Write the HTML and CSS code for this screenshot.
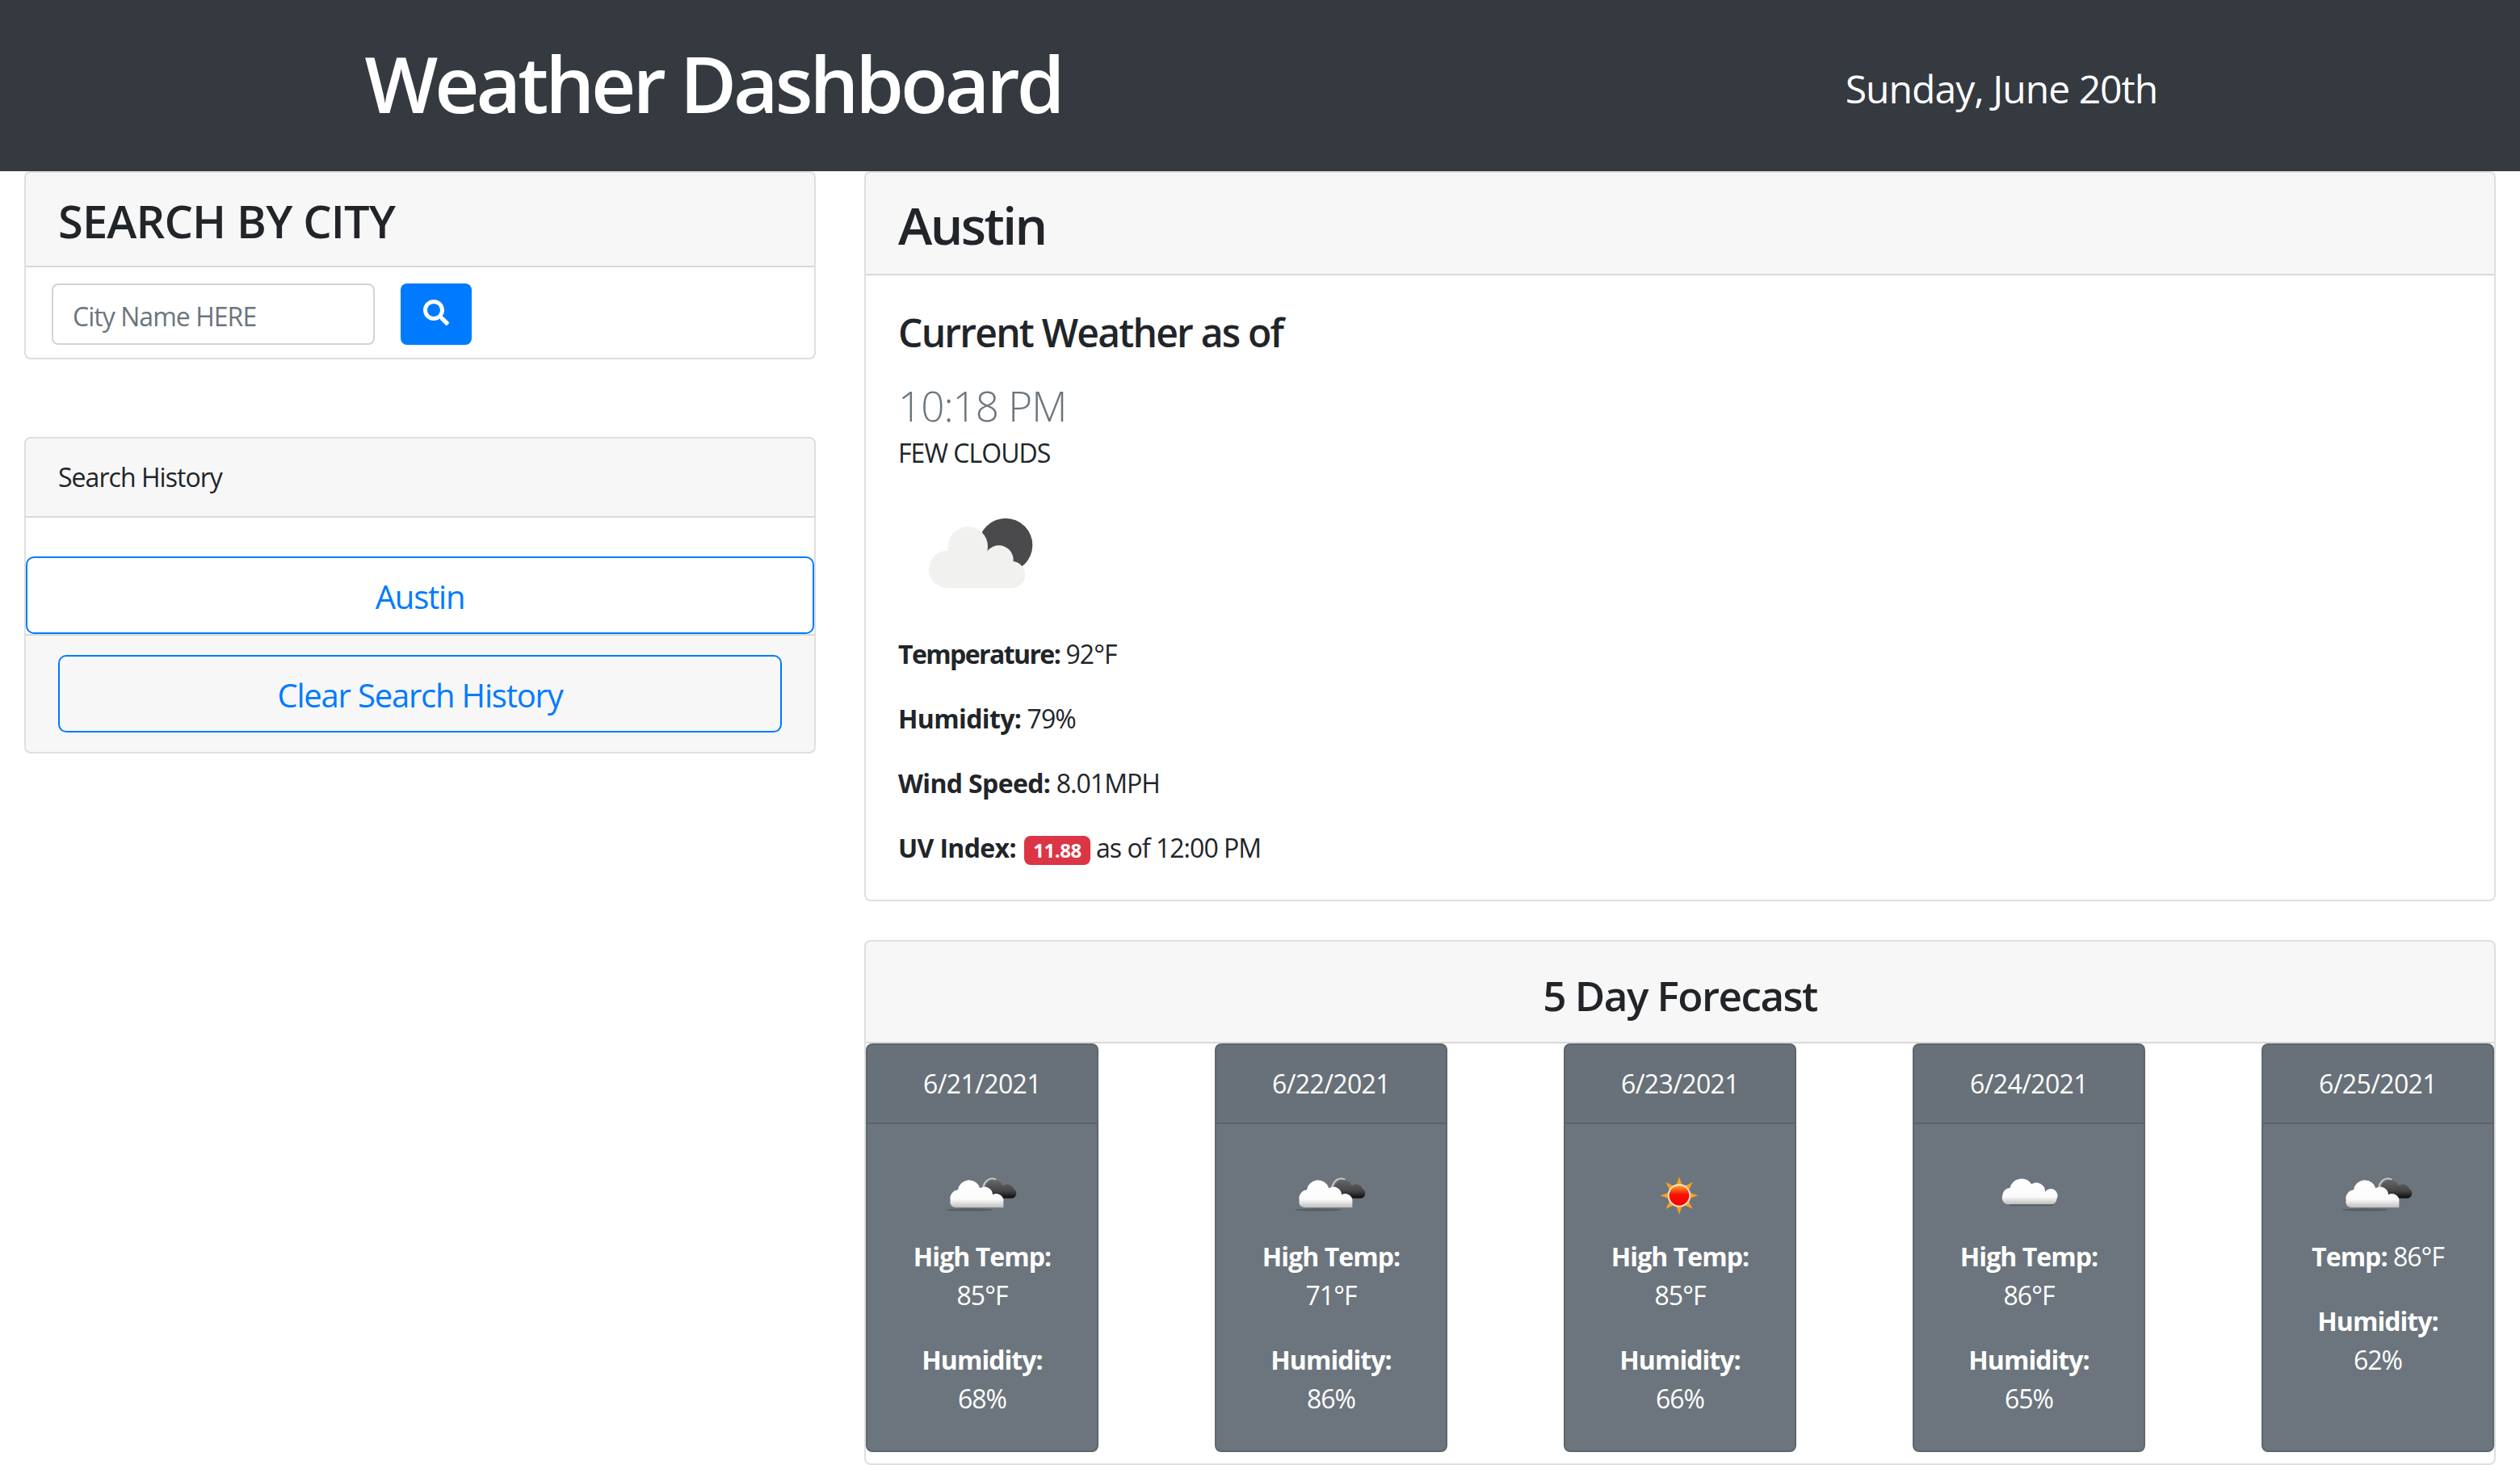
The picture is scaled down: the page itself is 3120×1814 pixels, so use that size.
FILE: index.html
```html
<!DOCTYPE html>
<html lang="en">
<head>
<meta charset="utf-8">
<title>Weather Dashboard</title>
<link rel="stylesheet" href="styles.css">
</head>
<body>
<svg class="sprite" aria-hidden="true">
  <defs>
    <linearGradient id="white-cloud" x1="0" y1="0" x2="0" y2="1">
      <stop offset="0" stop-color="#ffffff"/>
      <stop offset="0.7" stop-color="#fbfbfb"/>
      <stop offset="1" stop-color="#bdbdbd"/>
    </linearGradient>
    <linearGradient id="dark-cloud" x1="0" y1="0" x2="0" y2="1">
      <stop offset="0" stop-color="#666668"/>
      <stop offset="0.6" stop-color="#454547"/>
      <stop offset="1" stop-color="#0c0c0c"/>
    </linearGradient>
    <linearGradient id="sun-core" x1="0" y1="0" x2="0" y2="1">
      <stop offset="0" stop-color="#fba52a"/>
      <stop offset="0.45" stop-color="#fb0f04"/>
      <stop offset="1" stop-color="#ff0000"/>
    </linearGradient>
    <symbol id="i-partly" viewBox="18 -36 300 300">
      <ellipse cx="120" cy="168" rx="85" ry="5" fill="#3f454b" opacity=".45"/>
      <path d="M172 84C178 58 200 44 220 56" fill="none" stroke="#c9c9c9" stroke-width="6"/>
      <g fill="url(#dark-cloud)">
        <path d="M180 125V85A34 34 0 0 1 245 78A26 26 0 0 1 285 90A19 19 0 0 1 280 125Z"/>
      </g>
      <path d="M50 133A32 32 0 0 1 78 94A42 42 0 0 1 160 88A30 30 0 0 1 207 112A27 27 0 0 1 247 140V160H68A20 20 0 0 1 50 133Z" fill="url(#white-cloud)"/>
    </symbol>
    <symbol id="i-cloud" viewBox="-24 -36 300 300">
      <rect x="55" y="146" width="160" height="7" fill="#3f454b" opacity=".6"/>
      <path d="M27 118A32 32 0 0 1 56 86A44 44 0 0 1 136 73A32 32 0 0 1 186 102A24 24 0 0 1 229 128A20 20 0 0 1 210 148H50A24 24 0 0 1 27 118Z" fill="url(#white-cloud)"/>
    </symbol>
    <symbol id="i-sun" viewBox="-27 -36 300 300">
      <polygon points="120,45 133,83 170,65 152,102 190,115 152,128 170,165 133,147 120,185 107,147 70,165 88,128 50,115 88,102 70,65 107,83" fill="#f7a11d"/>
      <circle cx="120" cy="115" r="43" fill="#fbe3c4"/>
      <circle cx="120" cy="115" r="37" fill="url(#sun-core)"/>
    </symbol>
  </defs>
</svg>

<header class="topbar">
  <h1 class="topbar-title">Weather Dashboard</h1>
  <p class="topbar-date">Sunday, June 20th</p>
</header>

<main class="layout">
  <aside class="sidebar">
    <section class="card search-card">
      <div class="card-header"><h3 class="search-title">SEARCH BY CITY</h3></div>
      <form class="search-form">
        <input class="city-input" type="text" placeholder="City Name HERE">
        <button class="search-btn" type="button" aria-label="Search">
          <svg class="search-icon" viewBox="0 0 512 512"><path fill="currentColor" d="M505 442.7L405.3 343c-4.5-4.5-10.6-7-17-7H372c27.6-35.3 44-79.7 44-128C416 93.1 322.9 0 208 0S0 93.1 0 208s93.1 208 208 208c48.3 0 92.7-16.4 128-44v16.3c0 6.4 2.5 12.5 7 17l99.7 99.7c9.4 9.4 24.6 9.4 33.9 0l28.3-28.3c9.4-9.4 9.4-24.6.1-34zM208 336c-70.7 0-128-57.2-128-128 0-70.7 57.2-128 128-128 70.7 0 128 57.2 128 128 0 70.7-57.2 128-128 128z"/></svg>
        </button>
      </form>
    </section>

    <section class="card history-card">
      <div class="card-header history-header">Search History</div>
      <div class="history-list">
        <button class="btn-outline btn-block" type="button">Austin</button>
      </div>
      <div class="history-footer">
        <button class="btn-outline btn-block" type="button">Clear Search History</button>
      </div>
    </section>
  </aside>

  <div class="content">
    <section class="card">
      <div class="card-header city-header"><h2 class="city-name">Austin</h2></div>
      <div class="current-body">
        <h4 class="current-title">Current Weather as of</h4>
        <div class="current-time">10:18 PM</div>
        <div class="current-desc">FEW CLOUDS</div>
        <svg class="current-icon" viewBox="-54 -135 600 600">
          <circle cx="345" cy="135" r="100" fill="#4a4a4c"/>
          <g fill="#f1f1f0">
            <circle cx="130" cy="225" r="70"/>
            <circle cx="205" cy="140" r="74"/>
            <circle cx="320" cy="190" r="54"/>
            <circle cx="368" cy="245" r="50"/>
            <rect x="130" y="170" width="238" height="125"/>
          </g>
        </svg>
        <p class="stat stat-temp"><strong>Temperature:</strong> 92°F</p>
        <p class="stat"><strong>Humidity:</strong> 79%</p>
        <p class="stat"><strong>Wind Speed:</strong> 8.01MPH</p>
        <p class="stat stat-last"><strong>UV Index:</strong> <span class="badge">11.88</span> as of 12:00 PM</p>
      </div>
    </section>

    <section class="card forecast-card">
      <div class="card-header forecast-header"><h2 class="forecast-title">5 Day Forecast</h2></div>
      <div class="forecast-row">
        <article class="day">
          <div class="day-date">6/21/2021</div>
          <div class="day-body">
            <svg class="day-icon"><use href="#i-partly"/></svg>
            <p class="day-line"><strong>High Temp:</strong><br>85°F</p>
            <p class="day-line day-last"><strong>Humidity:</strong><br>68%</p>
          </div>
        </article>
        <article class="day">
          <div class="day-date">6/22/2021</div>
          <div class="day-body">
            <svg class="day-icon"><use href="#i-partly"/></svg>
            <p class="day-line"><strong>High Temp:</strong><br>71°F</p>
            <p class="day-line day-last"><strong>Humidity:</strong><br>86%</p>
          </div>
        </article>
        <article class="day">
          <div class="day-date">6/23/2021</div>
          <div class="day-body">
            <svg class="day-icon"><use href="#i-sun"/></svg>
            <p class="day-line"><strong>High Temp:</strong><br>85°F</p>
            <p class="day-line day-last"><strong>Humidity:</strong><br>66%</p>
          </div>
        </article>
        <article class="day">
          <div class="day-date">6/24/2021</div>
          <div class="day-body">
            <svg class="day-icon"><use href="#i-cloud"/></svg>
            <p class="day-line"><strong>High Temp:</strong><br>86°F</p>
            <p class="day-line day-last"><strong>Humidity:</strong><br>65%</p>
          </div>
        </article>
        <article class="day">
          <div class="day-date">6/25/2021</div>
          <div class="day-body">
            <svg class="day-icon"><use href="#i-partly"/></svg>
            <p class="day-line"><strong>Temp:</strong> 86°F</p>
            <p class="day-line day-last"><strong>Humidity:</strong><br>62%</p>
          </div>
        </article>
      </div>
    </section>
  </div>
</main>
</body>
</html>
```

FILE: styles.css
```css
* { box-sizing: border-box; }

html, body { margin: 0; padding: 0; }

body {
  background: #fff;
  color: #212529;
  font-family: "Open Sans", "Noto Sans", sans-serif;
  font-size: 32px;
  line-height: 48px;
  letter-spacing: -0.03em;
  overflow: hidden;
}

.sprite { display: block; width: 0; height: 0; }

h1, h2, h3, h4, p { margin: 0; }

.topbar {
  display: grid;
  grid-template-columns: 7fr 5fr;
  align-items: center;
  height: 212px;
  background: #343a40;
  color: #fff;
}

.topbar-title {
  padding: 0 54px 8px 0;
  font-size: 96px;
  font-weight: 600;
  line-height: 115px;
  letter-spacing: -0.042em;
  text-align: center;
}

.topbar-date {
  padding: 8px 0 0 16px;
  font-size: 48px;
  font-weight: 400;
  line-height: 72px;
  text-align: center;
}

.layout {
  display: grid;
  grid-template-columns: 1040px 2080px;
}

.sidebar { padding: 0 30px; }
.content { padding: 0 30px; }

.card {
  background: #fff;
  border: 2px solid rgba(0, 0, 0, 0.125);
  border-radius: 8px;
  overflow: hidden;
}

.card-header {
  padding: 26px 40px 22px;
  background: rgba(0, 0, 0, 0.03);
  border-bottom: 2px solid rgba(0, 0, 0, 0.125);
}

.search-title {
  font-size: 56px;
  font-weight: 600;
  line-height: 67px;
  letter-spacing: -0.015em;
}

.search-form {
  display: flex;
  gap: 32px;
  padding: 20px 32px 16px;
}

.city-input {
  width: 400px;
  height: 76px;
  padding: 14px 24px 10px;
  border: 2px solid #ced4da;
  border-radius: 8px;
  color: #495057;
  font: inherit;
  letter-spacing: inherit;
}

.city-input::placeholder { color: #6c757d; opacity: 1; }

.search-btn {
  display: flex;
  align-items: center;
  justify-content: center;
  width: 88px;
  height: 76px;
  padding: 0 0 4px;
  background: #007bff;
  border: 0;
  border-radius: 8px;
  color: #fff;
}

.search-icon { width: 32px; height: 32px; }

.history-card { margin-top: 96px; }

.history-header { padding: 24px 40px; }

.history-list { padding: 48px 0 0; }

.btn-outline {
  display: block;
  height: 96px;
  padding: 18px 16px 14px;
  background: transparent;
  border: 2px solid #007bff;
  border-radius: 10px;
  color: #007bff;
  font: inherit;
  font-size: 40px;
  line-height: 60px;
  letter-spacing: -0.03em;
  text-align: center;
}

.btn-block { width: 100%; }

.history-footer {
  padding: 24px 40px;
  background: rgba(0, 0, 0, 0.03);
  border-top: 2px solid rgba(0, 0, 0, 0.125);
}

.city-name {
  font-size: 64px;
  font-weight: 600;
  line-height: 77px;
  letter-spacing: -0.04em;
}

.current-body { padding: 40px; }

.current-title {
  padding-top: 2px;
  font-size: 48px;
  font-weight: 600;
  line-height: 58px;
  letter-spacing: -0.037em;
}

.current-time {
  margin-top: 30px;
  color: #6c757d;
  font-size: 51.2px;
  font-weight: 300;
  line-height: 62px;
  letter-spacing: -0.02em;
}

.current-desc { margin-top: 4px; }

.current-icon {
  display: block;
  width: 200px;
  height: 200px;
  margin-bottom: 1px;
  filter: blur(0.5px);
}

.stat { margin-bottom: 32px; }
.stat-last { margin-bottom: 0; }

.stat strong { font-weight: 700; letter-spacing: -0.02em; }
.stat-temp strong { letter-spacing: -0.05em; }
.day-line strong { font-weight: 700; }

.badge {
  display: inline-block;
  margin-left: 3px;
  padding: 6px 11px;
  background: #dc3545;
  border-radius: 8px;
  color: #fff;
  font-size: 24px;
  font-weight: 700;
  line-height: 24px;
  letter-spacing: -0.02em;
  vertical-align: baseline;
}

.forecast-card { margin-top: 48px; }

.forecast-header { padding: 28px 40px 19px; text-align: center; }

.forecast-title {
  font-size: 51.2px;
  font-weight: 600;
  line-height: 77px;
  letter-spacing: -0.03em;
}

.forecast-row {
  display: flex;
  justify-content: space-between;
  padding-bottom: 14px;
}

.day {
  width: 288px;
  background: #6c757d;
  border: 2px solid rgba(0, 0, 0, 0.125);
  border-radius: 8px;
  color: #fff;
  overflow: hidden;
  text-align: center;
}

.day-date {
  padding: 24px 16px;
  background: rgba(0, 0, 0, 0.03);
  border-bottom: 2px solid rgba(0, 0, 0, 0.125);
  letter-spacing: -0.02em;
}

.day-body { padding: 38px 24px 40px; }

.day-icon {
  display: block;
  width: 100px;
  height: 100px;
  margin: 0 auto 2px;
  filter: blur(0.6px);
}

.day-line { margin-bottom: 32px; }
.day-last { margin-bottom: 0; }
```
